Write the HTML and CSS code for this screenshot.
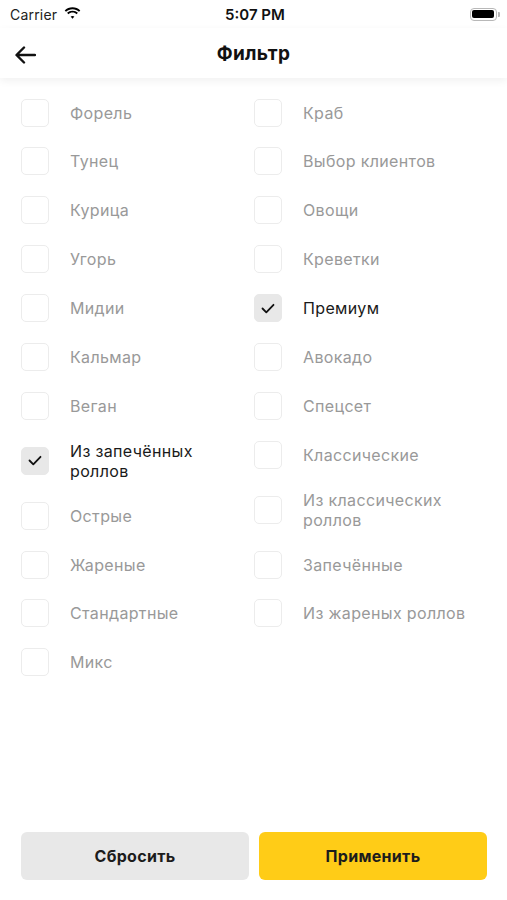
FILE: index.html
```html
<!DOCTYPE html>
<html lang="ru">
<head>
<meta charset="utf-8">
<link rel="stylesheet" href="styles.css">
</head>
<body>
<div class="screen">
  <div class="status">
    <div class="status-left">
      <span class="carrier">Carrier</span>
      <svg class="wifi" width="17" height="12" viewBox="0 0 17 12"><path d="M8.5 2.2c2.5 0 4.8 1 6.5 2.6l1.3-1.4C14.2 1.4 11.5.2 8.5.2S2.8 1.4.7 3.4L2 4.8c1.7-1.6 4-2.6 6.5-2.6z" fill="#000"/><path d="M8.5 5.6c1.6 0 3 .6 4.1 1.6l1.3-1.4C12.5 4.5 10.6 3.7 8.5 3.7S4.5 4.5 3.1 5.8l1.3 1.4c1.1-1 2.5-1.6 4.1-1.6z" fill="#000"/><path d="M8.5 8.9c.8 0 1.4.3 1.9.7L8.5 11.7 6.6 9.6c.5-.4 1.1-.7 1.9-.7z" fill="#000"/></svg>
    </div>
    <div class="time">5:07 PM</div>
    <div class="status-right">
      <div class="battery"><div class="battery-fill"></div></div>
      <div class="battery-cap"></div>
    </div>
  </div>
  <div class="navbar">
    <svg class="back" width="22" height="18" viewBox="0 0 22 18"><path d="M21 9H3M10 1.5L2.5 9 10 16.5" fill="none" stroke="#111" stroke-width="2.4" stroke-linecap="round" stroke-linejoin="round"/></svg>
    <div class="title">Фильтр</div>
  </div>
  <div class="list">
    <div class="col">
      <div class="row"><span class="box"></span><span class="label">Форель</span></div>
      <div class="row"><span class="box"></span><span class="label">Тунец</span></div>
      <div class="row"><span class="box"></span><span class="label">Курица</span></div>
      <div class="row"><span class="box"></span><span class="label">Угорь</span></div>
      <div class="row"><span class="box"></span><span class="label">Мидии</span></div>
      <div class="row"><span class="box"></span><span class="label">Кальмар</span></div>
      <div class="row"><span class="box"></span><span class="label">Веган</span></div>
      <div class="row checked"><span class="box"><svg width="14" height="11" viewBox="0 0 14 11"><path d="M1.5 5.5l3.8 3.8L12.5 1.8" fill="none" stroke="#111" stroke-width="1.8" stroke-linecap="round" stroke-linejoin="round"/></svg></span><span class="label">Из запечённых<br>роллов</span></div>
      <div class="row"><span class="box"></span><span class="label">Острые</span></div>
      <div class="row"><span class="box"></span><span class="label">Жареные</span></div>
      <div class="row"><span class="box"></span><span class="label">Стандартные</span></div>
      <div class="row"><span class="box"></span><span class="label">Микс</span></div>
    </div>
    <div class="col">
      <div class="row"><span class="box"></span><span class="label">Краб</span></div>
      <div class="row"><span class="box"></span><span class="label">Выбор клиентов</span></div>
      <div class="row"><span class="box"></span><span class="label">Овощи</span></div>
      <div class="row"><span class="box"></span><span class="label">Креветки</span></div>
      <div class="row checked"><span class="box"><svg width="14" height="11" viewBox="0 0 14 11"><path d="M1.5 5.5l3.8 3.8L12.5 1.8" fill="none" stroke="#111" stroke-width="1.8" stroke-linecap="round" stroke-linejoin="round"/></svg></span><span class="label">Премиум</span></div>
      <div class="row"><span class="box"></span><span class="label">Авокадо</span></div>
      <div class="row"><span class="box"></span><span class="label">Спецсет</span></div>
      <div class="row"><span class="box"></span><span class="label">Классические</span></div>
      <div class="row"><span class="box"></span><span class="label">Из классических<br>роллов</span></div>
      <div class="row"><span class="box"></span><span class="label">Запечённые</span></div>
      <div class="row"><span class="box"></span><span class="label">Из жареных роллов</span></div>
    </div>
  </div>
  <div class="footer">
    <button class="btn btn-reset">Сбросить</button>
    <button class="btn btn-apply">Применить</button>
  </div>
</div>
</body>
</html>
```
FILE: styles.css
```css
* { box-sizing: border-box; }
html, body { margin: 0; padding: 0; background: #fff; }
body { font-family: Inter, "Noto Sans", "Liberation Sans", sans-serif; color: #111; }
.screen { height: 900px; display: flex; flex-direction: column; }

.status { height: 28px; display: flex; align-items: center; justify-content: space-between; padding: 0 7px 0 10px; position: relative; }
.status-left { display: flex; align-items: center; gap: 7px; width: 120px; }
.carrier { font-size: 14px; color: #222; letter-spacing: 0.2px; }
.wifi { margin-top: -2px; }
.time { font-size: 15px; font-weight: 600; color: #111; }
.status-right { width: 120px; display: flex; justify-content: flex-end; align-items: center; }
.battery { width: 27px; height: 13px; border: 1px solid #b8b8b8; border-radius: 4px; padding: 1.5px; }
.battery-fill { width: 100%; height: 100%; background: #000; border-radius: 2px; }
.battery-cap { width: 2px; height: 5px; background: #b8b8b8; border-radius: 0 1px 1px 0; margin-left: 1px; }

.navbar { height: 50px; display: flex; align-items: center; justify-content: center; position: relative; box-shadow: 0 3px 8px rgba(0,0,0,0.06); z-index: 1; }
.back { position: absolute; left: 14px; top: 18px; }
.title { font-size: 19px; font-weight: 700; color: #111; letter-spacing: 0.3px; }

.list { flex: 1; display: grid; grid-template-columns: 233px 233px; padding: 10px 0 0 21px; align-content: start; }
.col { display: flex; flex-direction: column; }
.row { display: flex; align-items: center; padding: 10.5px 0 10.4px; gap: 21px; }
.box { flex: none; width: 28px; height: 28px; border: 1px solid #ececec; border-radius: 5px; display: flex; align-items: center; justify-content: center; }
.row.checked .box { background: #e8e8e8; border-color: #e8e8e8; }
.label { font-size: 16px; line-height: 20px; color: #999; letter-spacing: 0.35px; }
.row.checked .label { color: #1a1a1a; }

.footer { display: flex; gap: 10px; padding: 0 20px 20px 21px; }
.btn { flex: 1; height: 48px; border: none; border-radius: 6px; font-family: inherit; font-size: 16px; font-weight: 700; color: #1c1c1c; letter-spacing: 0.3px; }
.btn-reset { background: #e8e8e8; }
.btn-apply { background: #ffcc17; }
```
